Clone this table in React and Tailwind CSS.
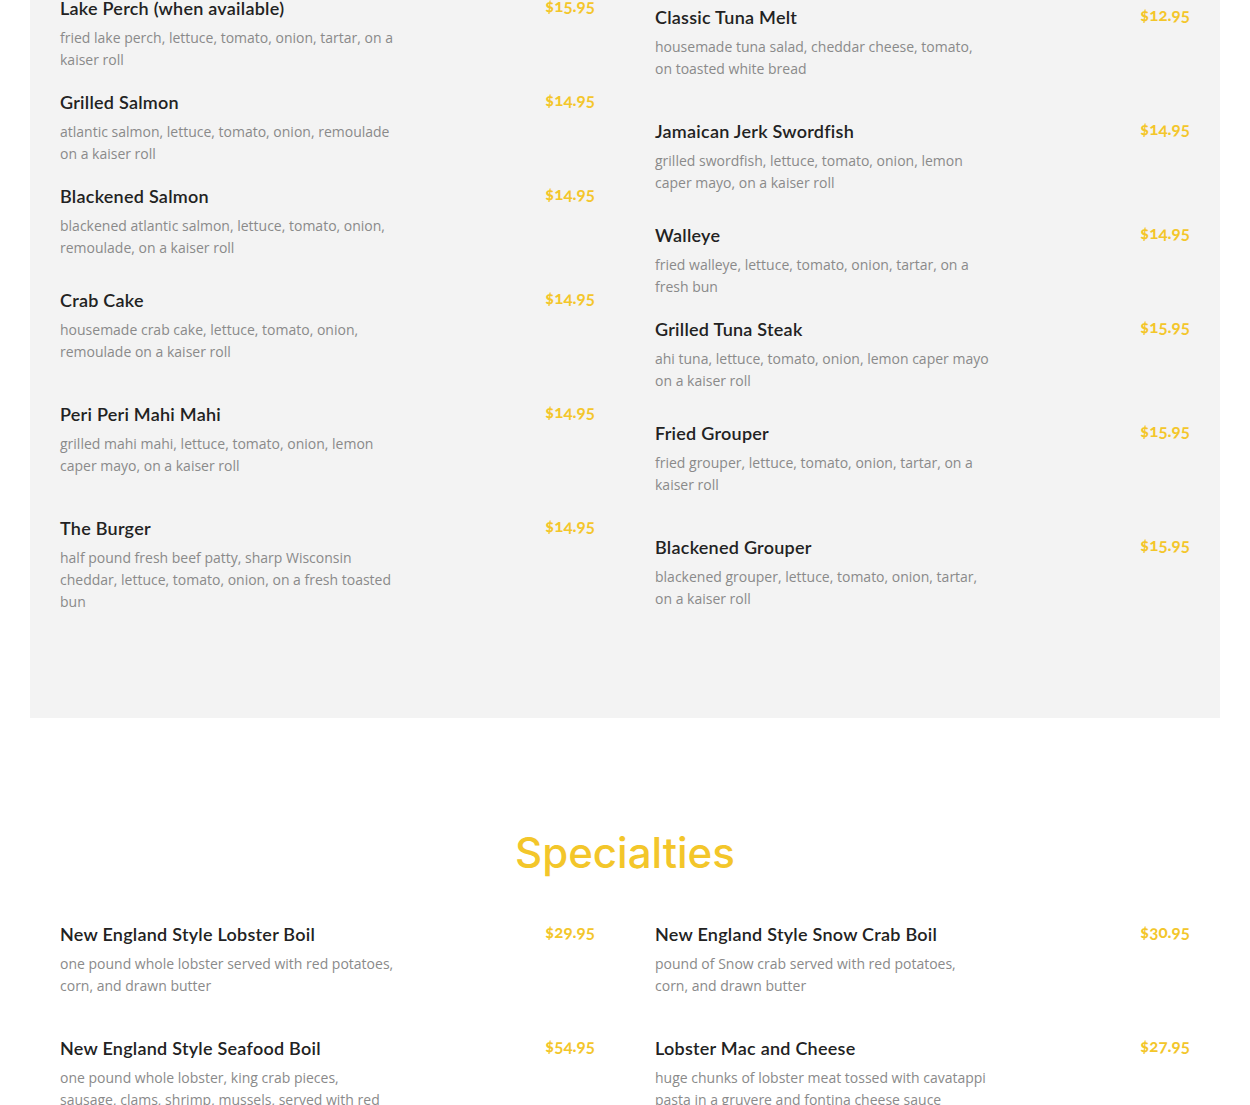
import React from 'react'

const leftItems = [
  { name: 'Lake Perch (when available)', price: '$15.95', desc: 'fried lake perch, lettuce, tomato, onion, tartar, on a kaiser roll', gap: 'mt-[-3px]' },
  { name: 'Grilled Salmon', price: '$14.95', desc: 'atlantic salmon, lettuce, tomato, onion, remoulade on a kaiser roll', gap: 'mt-[20px]' },
  { name: 'Blackened Salmon', price: '$14.95', desc: 'blackened atlantic salmon, lettuce, tomato, onion, remoulade, on a kaiser roll', gap: 'mt-[20px]' },
  { name: 'Crab Cake', price: '$14.95', desc: 'housemade crab cake, lettuce, tomato, onion, remoulade on a kaiser roll', gap: 'mt-[30px]' },
  { name: 'Peri Peri Mahi Mahi', price: '$14.95', desc: 'grilled mahi mahi, lettuce, tomato, onion, lemon caper mayo, on a kaiser roll', gap: 'mt-[40px]' },
  { name: 'The Burger', price: '$14.95', desc: 'half pound fresh beef patty, sharp Wisconsin cheddar, lettuce, tomato, onion, on a fresh toasted bun', gap: 'mt-[40px]' },
]

const rightItems = [
  { name: 'Classic Tuna Melt', price: '$12.95', desc: 'housemade tuna salad, cheddar cheese, tomato, on toasted white bread', gap: 'mt-[6px]' },
  { name: 'Jamaican Jerk Swordfish', price: '$14.95', desc: 'grilled swordfish, lettuce, tomato, onion, lemon caper mayo, on a kaiser roll', gap: 'mt-[40px]' },
  { name: 'Walleye', price: '$14.95', desc: 'fried walleye, lettuce, tomato, onion, tartar, on a fresh bun', gap: 'mt-[30px]' },
  { name: 'Grilled Tuna Steak', price: '$15.95', desc: 'ahi tuna, lettuce, tomato, onion, lemon caper mayo on a kaiser roll', gap: 'mt-[20px]' },
  { name: 'Fried Grouper', price: '$15.95', desc: 'fried grouper, lettuce, tomato, onion, tartar, on a kaiser roll', gap: 'mt-[30px]' },
  { name: 'Blackened Grouper', price: '$15.95', desc: 'blackened grouper, lettuce, tomato, onion, tartar, on a kaiser roll', gap: 'mt-[40px]' },
]

const specLeft = [
  { name: 'New England Style Lobster Boil', price: '$29.95', desc: 'one pound whole lobster served with red potatoes, corn, and drawn butter', gap: 'mt-0' },
  { name: 'New England Style Seafood Boil', price: '$54.95', desc: 'one pound whole lobster, king crab pieces, sausage, clams, shrimp, mussels, served with red potatoes, corn, and drawn butter', gap: 'mt-[40px]' },
]

const specRight = [
  { name: 'New England Style Snow Crab Boil', price: '$30.95', desc: 'pound of Snow crab served with red potatoes, corn, and drawn butter', gap: 'mt-0' },
  { name: 'Lobster Mac and Cheese', price: '$27.95', desc: 'huge chunks of lobster meat tossed with cavatappi pasta in a gruyere and fontina cheese sauce', gap: 'mt-[40px]' },
]

const MenuItem = ({ item }) => (
  <div className={`${item.gap} flex justify-between`}>
    <div className="w-[336px]">
      <h3 className="font-['Lato',sans-serif] text-[18px] leading-[22px] font-semibold tracking-[0.25px] text-[#222]">{item.name}</h3>
      <p className="mt-[8px] font-['Open_Sans',sans-serif] text-[14px] leading-[22px] text-[#8a8a8a]">{item.desc}</p>
    </div>
    <span className="mt-[-2px] font-['Lato',sans-serif] text-[17px] leading-[22px] font-bold text-[#f3c62a] oldstyle-nums">{item.price}</span>
  </div>
)

const Column = ({ items }) => (
  <div className="flex flex-col">
    {items.map((it) => <MenuItem key={it.name} item={it} />)}
  </div>
)

export default function App() {
  return (
    <div className="bg-white w-[1250px] overflow-hidden">
      <div className="mx-[30px] bg-[#f3f3f3] px-[30px] pb-[105px]">
        <div className="grid grid-cols-2 gap-x-[60px]">
          <Column items={leftItems} />
          <Column items={rightItems} />
        </div>
      </div>

      <h2 className="mt-[110px] text-center font-['Inter',sans-serif] text-[42px] leading-[50px] font-medium text-[#f3c62a]">Specialties</h2>

      <div className="mt-[45px] px-[60px] pb-[60px]">
        <div className="grid grid-cols-2 gap-x-[60px]">
          <Column items={specLeft} />
          <Column items={specRight} />
        </div>
      </div>
    </div>
  )
}
